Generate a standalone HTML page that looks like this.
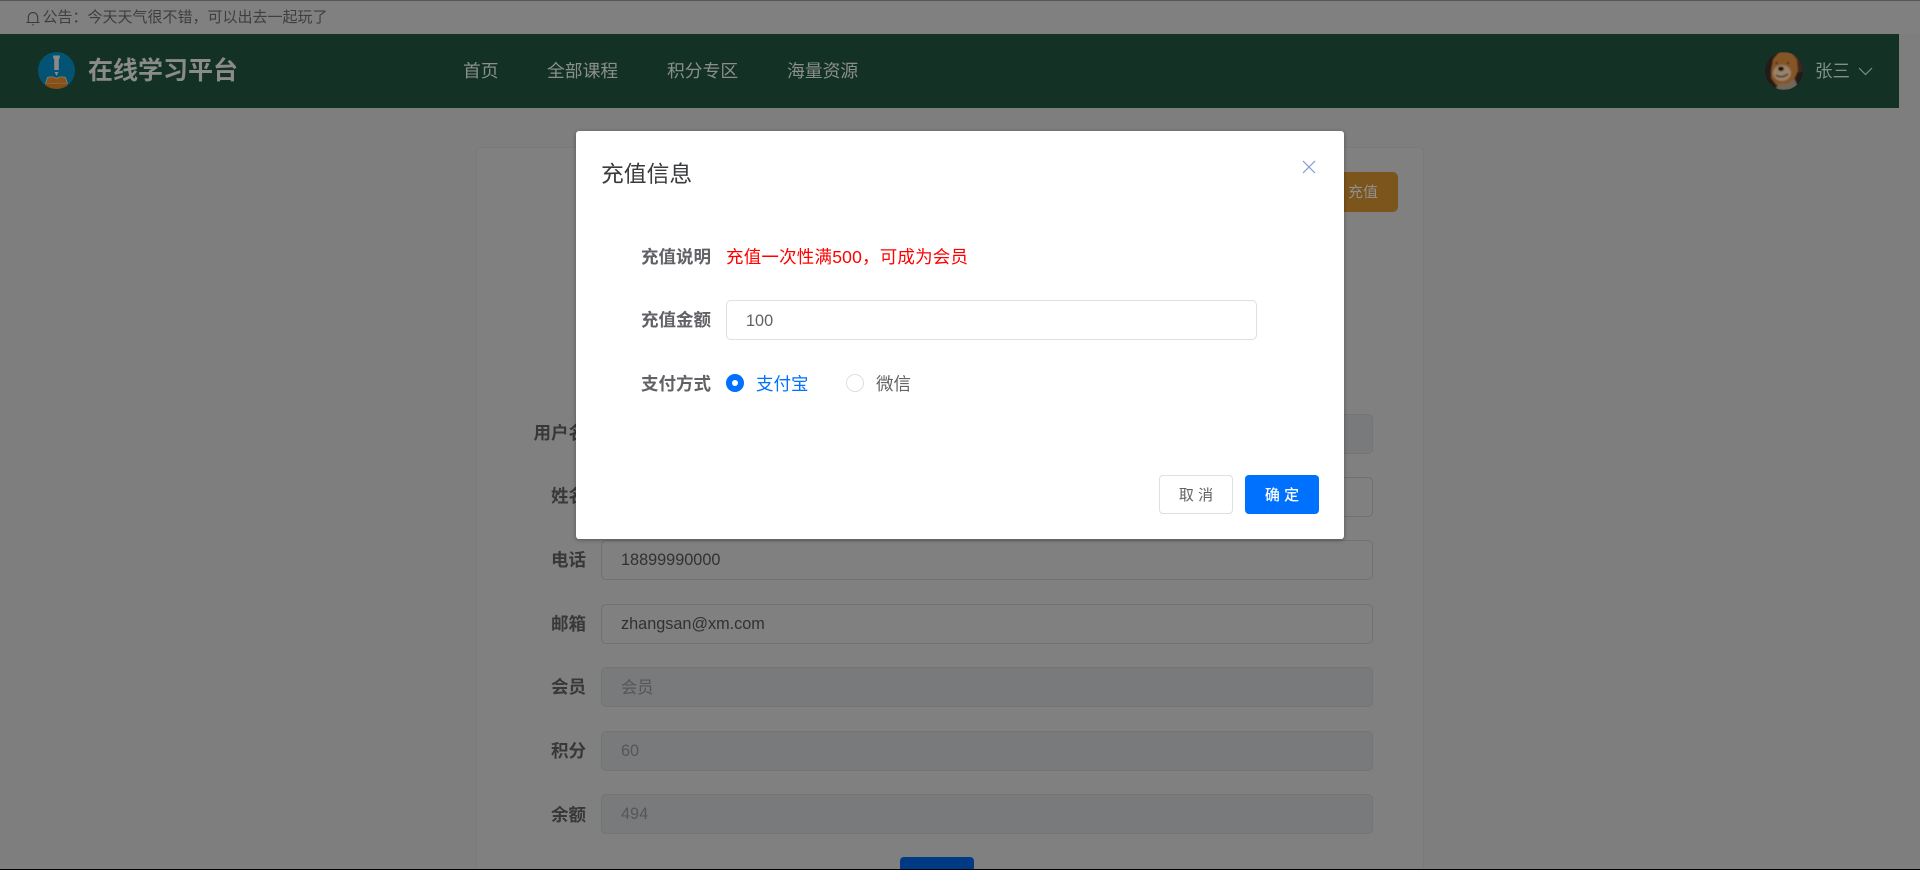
<!DOCTYPE html>
<html lang="zh-CN">
<head>
<meta charset="utf-8">
<title>在线学习平台</title>
<style>
html,body{margin:0;padding:0;width:1920px;height:870px;overflow:hidden;background:#7e7e7e;font-family:"Liberation Sans","Noto Sans CJK SC",sans-serif;}
#p{position:relative;width:1920px;height:870px;overflow:hidden;background:#7e7e7e;}
#p div{position:absolute;box-sizing:border-box;white-space:nowrap;}
svg{position:absolute;display:block;}
.lb{font-size:17.5px;font-weight:700;color:#383838;line-height:41px;height:40px;text-align:right;width:150px;left:436px;}
.in{left:601px;width:772px;height:40px;border:1px solid #6e7073;border-radius:5px;background:#808080;color:#303133;font-size:16.25px;line-height:39px;padding-left:19px;}
.dis{background:#787a7c;border-color:#727476;color:#54565a;}
.nav{top:58px;font-size:17.8px;line-height:26px;color:#8a8f8c;}
.ml{left:641px;font-size:17.5px;font-weight:700;color:#606266;line-height:25px;}
</style>
</head>
<body>
<div id="p">
<div style="left:0;top:0;width:1920px;height:1px;background:#555"></div>
<div style="left:0;top:1px;width:1920px;height:33px;background:#808080"></div>
<svg style="left:26px;top:10px" width="14" height="16" viewBox="0 0 14 16" fill="none" stroke="#3a3a3a" stroke-width="1.1"><path d="M0.5 12.5H13.5M2.3 12.5V7.5C2.3 4.5 4.3 2.6 7 2.6S11.7 4.5 11.7 7.5V12.5M6.2 14.8H7.8"/></svg>
<div style="left:42.5px;top:6px;font-size:15px;line-height:23px;color:#3e3e3e">公告：今天天气很不错，可以出去一起玩了</div>

<div style="left:0;top:34px;width:1899px;height:74px;background:#133225"></div>
<svg style="left:38px;top:52px" width="37" height="37" viewBox="0 0 37 37">
<defs><clipPath id="lc"><circle cx="18.5" cy="18.5" r="18.5"/></clipPath></defs>
<circle cx="18.5" cy="18.5" r="18.5" fill="#035474"/>
<path d="M15.2 3.5H21.8V6.5H20.8V18H16.2V6.5H15.2Z" fill="#8a8a8a"/>
<path d="M16.6 20H20.4L18.5 24Z" fill="#8a8a8a"/>
<g clip-path="url(#lc)">
<path d="M9.5 25.5C12.5 24.5 16 24.7 18.5 26.3C21 24.7 24.5 24.5 27.5 25.5L29.5 31.5H7.5Z" fill="#8a5219" stroke="#8a8a7a" stroke-width=".7"/>
<path d="M7.5 31.5H29.5V37H7.5Z" fill="#824e16"/>
</g>
</svg>
<div style="left:88px;top:53px;font-size:25px;font-weight:700;line-height:36px;color:#8b8b8b">在线学习平台</div>
<div class="nav" style="left:463px">首页</div>
<div class="nav" style="left:547px">全部课程</div>
<div class="nav" style="left:667px">积分专区</div>
<div class="nav" style="left:787px">海量资源</div>
<svg style="left:1765px;top:52px" width="38" height="38" viewBox="0 0 38 38">
<defs><clipPath id="c"><circle cx="19" cy="19" r="19"/></clipPath><filter id="b" x="-20%" y="-20%" width="140%" height="140%"><feGaussianBlur stdDeviation=".8"/></filter></defs>
<g clip-path="url(#c)"><rect width="38" height="38" fill="#241a17"/>
<g filter="url(#b)">
<path d="M30 0H38V20L31 20Z" fill="#3d2620"/>
<path d="M6 18L8 7L14 0H27L32 8L33 19L29 28L22 33H11L6 26Z" fill="#855526"/>
<ellipse cx="17" cy="21" rx="9" ry="8" fill="#9a8269"/>
<ellipse cx="16" cy="16.8" rx="3" ry="2.3" fill="#14100e"/>
<path d="M11 23Q16 27 23 22" stroke="#33231e" stroke-width="1.4" fill="none"/>
<circle cx="11.5" cy="11" r="1" fill="#20140e"/><circle cx="23" cy="11" r="1" fill="#20140e"/>
<path d="M10 38L13 32H22L30 27L34 38Z" fill="#72665a"/>
</g></g>
</svg>
<div style="left:1815px;top:58px;font-size:17.5px;line-height:26px;color:#80908a">张三</div>
<svg style="left:1858px;top:66px" width="15" height="10" viewBox="0 0 15 10" fill="none" stroke="#74908a" stroke-width="1.2"><path d="M1 2L7.5 8.5L14 2"/></svg>

<!-- card -->
<div style="left:476px;top:147px;width:948px;height:740px;background:#808080;border:1px solid #7a7a7a;border-radius:5px"></div>
<div style="left:1300px;top:172px;width:98px;height:40px;background:#7c551c;border-radius:5px;color:#8f8f8f;font-size:15px;line-height:41px;padding-left:48px">充值</div>

<div class="lb" style="top:413px">用户名</div>
<div class="in dis" style="top:414px"></div>
<div class="lb" style="top:476px">姓名</div>
<div class="in" style="top:477px"></div>
<div class="lb" style="top:540px">电话</div>
<div class="in" style="top:540px">18899990000</div>
<div class="lb" style="top:604px">邮箱</div>
<div class="in" style="top:604px">zhangsan@xm.com</div>
<div class="lb" style="top:667px">会员</div>
<div class="in dis" style="top:667px;line-height:40px">会员</div>
<div class="lb" style="top:731px">积分</div>
<div class="in dis" style="top:731px">60</div>
<div class="lb" style="top:794px;line-height:42px">余额</div>
<div class="in dis" style="top:794px">494</div>
<div style="left:900px;top:857px;width:74px;height:20px;background:#003a85;border-radius:4px"></div>
<div style="left:0;top:869px;width:1920px;height:1px;background:#000"></div>

<!-- modal -->
<div style="left:576px;top:131px;width:768px;height:408px;background:#fff;border-radius:3px;box-shadow:0 1px 4px rgba(0,0,0,.35)"></div>
<div style="left:601px;top:157px;font-size:22.8px;line-height:34px;color:#3a3b3d">充值信息</div>
<svg style="left:1302px;top:160px" width="14" height="14" viewBox="0 0 14 14" fill="none" stroke="#7f9bd0" stroke-width="1.2"><path d="M1 1L13 13M13 1L1 13"/></svg>

<div class="ml" style="top:245px">充值说明</div>
<div style="left:726px;top:245px;font-size:17.5px;letter-spacing:.2px;line-height:25px;color:#ff0000">充值一次性满500，可成为会员</div>
<div class="ml" style="top:308px">充值金额</div>
<div style="left:726px;top:300px;width:531px;height:40px;border:1px solid #dcdfe6;border-radius:5px;background:#fff;color:#606266;font-size:16.25px;line-height:40px;padding-left:19px">100</div>
<div class="ml" style="top:371px;line-height:26px">支付方式</div>
<div style="left:726px;top:374px;width:18px;height:18px;border-radius:50%;background:#0070ff"></div>
<div style="left:732px;top:380px;width:6px;height:6px;border-radius:50%;background:#fff"></div>
<div style="left:756px;top:371px;font-size:17.5px;line-height:26px;color:#0070ff">支付宝</div>
<div style="left:846px;top:374px;width:18px;height:18px;border-radius:50%;border:1px solid #dcdfe6;background:#fff"></div>
<div style="left:876px;top:371px;font-size:17.5px;line-height:26px;color:#606266">微信</div>
<div style="left:1159px;top:475px;width:74px;height:39px;border:1px solid #dcdfe6;border-radius:4px;background:#fff;color:#606266;font-size:15px;line-height:39px;text-align:center">取 消</div>
<div style="left:1245px;top:475px;width:74px;height:39px;border-radius:4px;background:#0070ff;color:#fff;font-size:15px;font-weight:500;line-height:41px;text-align:center">确 定</div>
</div>
</body>
</html>
